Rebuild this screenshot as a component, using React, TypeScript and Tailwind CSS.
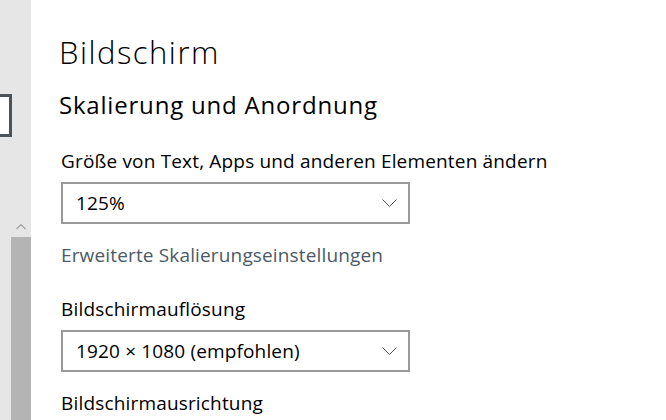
import React from 'react'

const Chevron = () => (
  <svg width="15" height="9" viewBox="0 0 15 9" className="shrink-0">
    <path d="M0.5 0.5 L7.5 7.5 L14.5 0.5" fill="none" stroke="#555" strokeWidth="1" />
  </svg>
)

const Dropdown = ({ value }: { value: string }) => (
  <div className="flex h-[42px] w-[349px] items-center justify-between border-2 border-[#999999] bg-white pl-[13px] pr-[11px]">
    <span className="text-[19px] leading-[24px] tracking-[0.15px] text-black">{value}</span>
    <Chevron />
  </div>
)

export default function App() {
  return (
    <div
      className="flex h-[420px] w-[666px] overflow-hidden bg-white"
      style={{ fontFamily: '"Open Sans", "Noto Sans", sans-serif' }}
    >
      {/* left nav edge + scrollbar */}
      <div className="flex w-[31px] shrink-0 flex-col bg-[#e6e6e6]">
        <div className="mt-[94px] h-[43px] w-[12px] border-[3px] border-l-0 border-[#4c5459] bg-white" />
        <svg width="10" height="7" viewBox="0 0 10 7" className="ml-[16px] mt-[86px]">
          <path d="M0.5 6 L5 1.5 L9.5 6" fill="none" stroke="#a0a0a0" strokeWidth="1.2" />
        </svg>
        <div className="ml-[11px] mt-[7px] flex-1 bg-[#b4b4b4]" />
      </div>

      {/* content */}
      <div className="flex flex-col pl-[28px] pt-[32px] text-black">
        <h1 className="text-[31px] leading-[40px] font-light tracking-[1.5px]">Bildschirm</h1>
        <h2 className="mt-[17px] text-[24px] leading-[32px] font-normal tracking-[0.8px]">Skalierung und Anordnung</h2>

        <div className="mt-[28px] pl-[2px] text-[19px] leading-[24px] tracking-[0.17px]">Größe von Text, Apps und anderen Elementen ändern</div>
        <div className="mt-[9px] pl-[2px]">
          <Dropdown value="125%" />
        </div>
        <div className="mt-[19px] pl-[2px] text-[19px] leading-[24px] tracking-[0.15px] text-[#4c5a66]">Erweiterte Skalierungseinstellungen</div>

        <div className="mt-[30px] pl-[2px] text-[19px] leading-[24px] tracking-[0.17px]">Bildschirmauflösung</div>
        <div className="mt-[9px] pl-[2px]">
          <Dropdown value="1920 × 1080 (empfohlen)" />
        </div>
        <div className="mt-[19px] pl-[2px] text-[19px] leading-[24px] tracking-[0.17px]">Bildschirmausrichtung</div>
      </div>
    </div>
  )
}
